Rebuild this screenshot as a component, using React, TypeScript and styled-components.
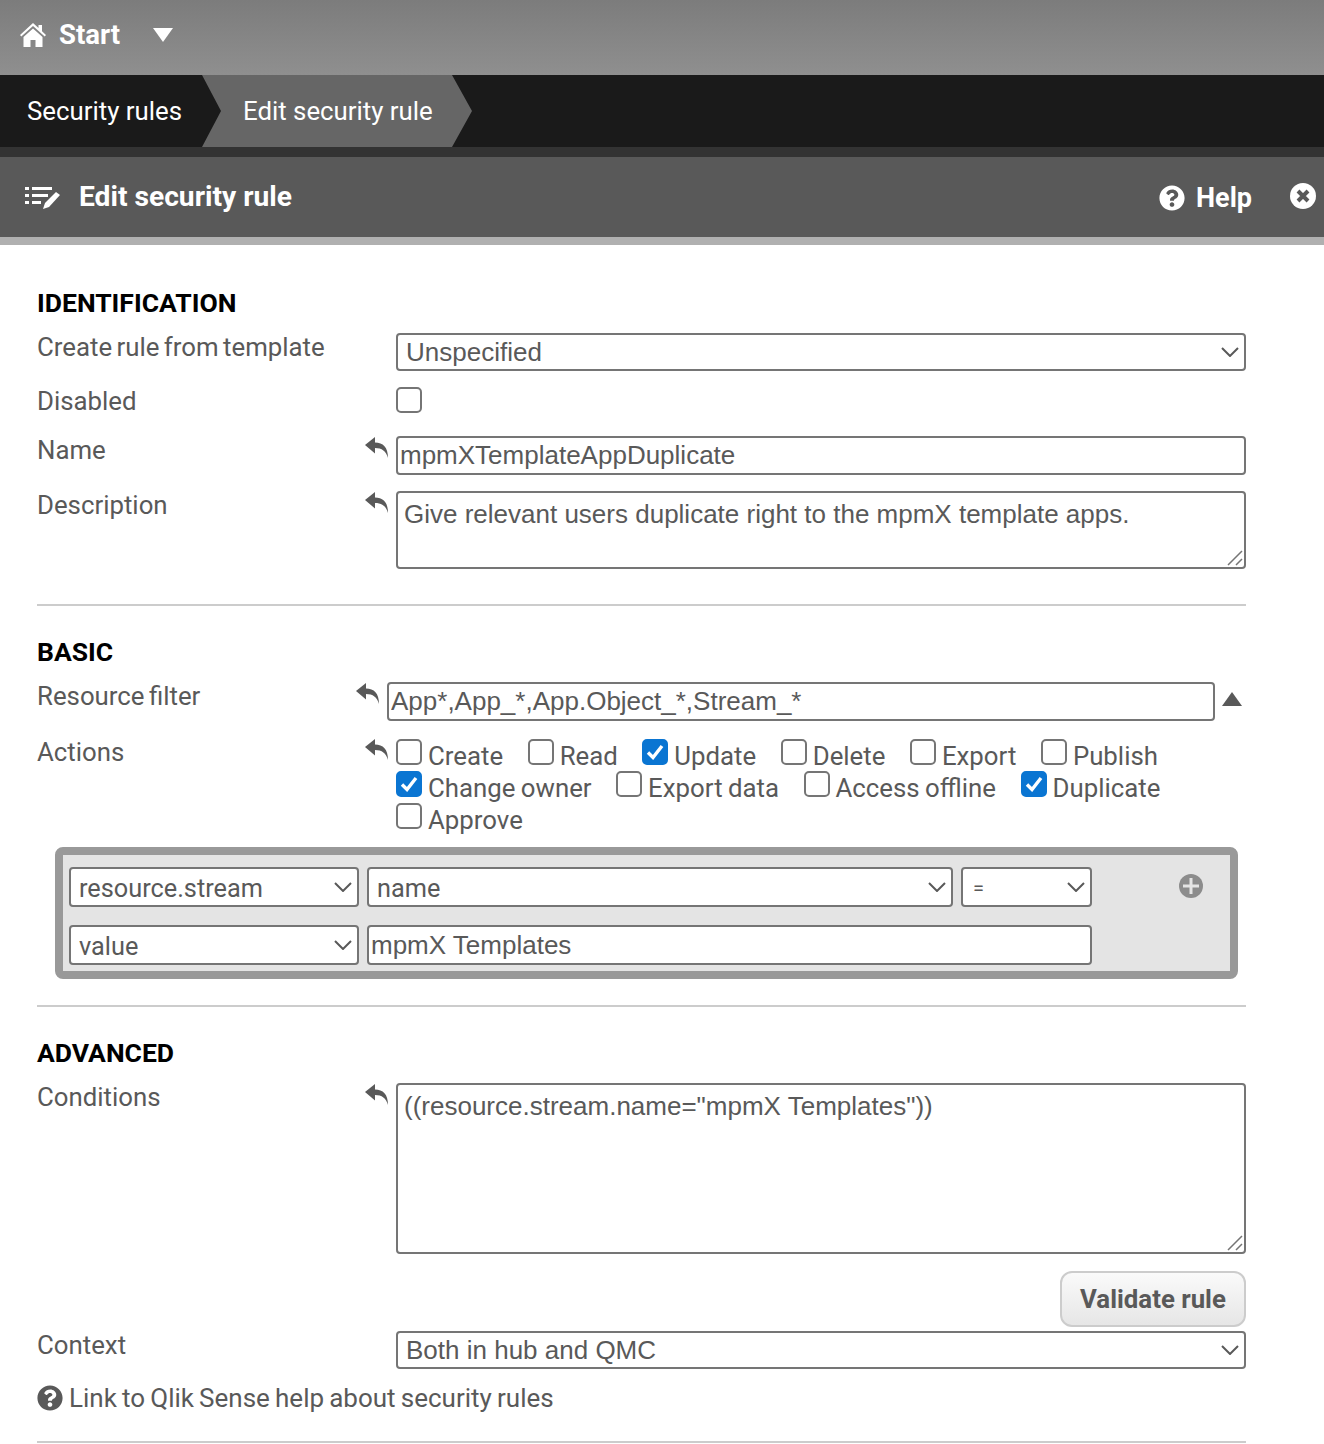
import React from 'react';
import styled, { createGlobalStyle } from 'styled-components';
import { FaQuestionCircle } from 'react-icons/fa';

const labelFont = `Roboto, "Liberation Sans", sans-serif`;
const inputFont = `"Liberation Sans", Arial, sans-serif`;

const GlobalStyle = createGlobalStyle`
  html, body {
    margin: 0;
    padding: 0;
    background: #fff;
    font-family: ${labelFont};
    color: #595959;
  }
  * { box-sizing: border-box; }
`;

const Page = styled.div`
  width: 1324px;
  height: 1444px;
  overflow: hidden;
`;

const TopBar = styled.header`
  height: 75px;
  display: flex;
  align-items: center;
  padding: 0 0 6px 19px;
  background: linear-gradient(to bottom, #7c7c7c, #8f8f8f);
  color: #fff;
  font-size: 27.5px;
  font-weight: 700;
`;

const StartLabel = styled.span`
  margin-left: 12px;
`;

const Caret = styled.span`
  margin-left: 33px;
  width: 0;
  height: 0;
  border-left: 10px solid transparent;
  border-right: 10px solid transparent;
  border-top: 14px solid #fff;
`;

const Breadcrumbs = styled.nav`
  height: 82px;
  display: flex;
  background: #1a1a1a;
  border-bottom: 10px solid #333;
  color: #fff;
  font-size: 25.8px;
`;

const FirstCrumb = styled.div`
  width: 222px;
  padding-left: 27px;
  display: flex;
  align-items: center;
`;

const ActiveCrumb = styled.div`
  width: 270px;
  margin-left: -20px;
  padding-left: 41px;
  display: flex;
  align-items: center;
  background: #666;
  clip-path: polygon(0 0, 250px 0, 270px 50%, 250px 100%, 0 100%, 19px 50%);
`;

const TitleBar = styled.div`
  height: 88px;
  display: flex;
  align-items: center;
  padding: 0 8px 0 25px;
  background: #595959;
  border-bottom: 8px solid #b0b0b0;
  color: #fff;
  font-weight: 700;
`;

const PageTitle = styled.h1`
  margin: 0 0 2px 18px;
  font-size: 28.2px;
  font-weight: 700;
  flex: 1;
`;

const HelpLink = styled.div`
  display: flex;
  align-items: center;
  gap: 11px;
  margin: 2px 38px 0 0;
  font-size: 27px;
`;

const CloseButton = styled.div`
  display: flex;
  margin-bottom: 3px;
`;

const Content = styled.main`
  width: 1209px;
  margin-left: 37px;
`;

const Section = styled.section<{ $top: number; $bottom: number }>`
  padding-top: ${p => p.$top}px;
  padding-bottom: ${p => p.$bottom}px;
  border-bottom: 2px solid #ccc;
`;

const Heading = styled.h2`
  margin: 0 0 13px;
  height: 32px;
  line-height: 32px;
  font-size: 26.5px;
  font-weight: 700;
  color: #000;
`;

const Row = styled.div<{ $gap?: number }>`
  display: grid;
  grid-template-columns: 328px 1fr;
  margin-bottom: ${p => p.$gap ?? 0}px;
`;

const Label = styled.div`
  font-size: 25.8px;
  line-height: 30px;
  word-spacing: -2px;
  color: #595959;
`;

const Control = styled.div<{ $shift?: number }>`
  position: relative;
  display: flex;
  gap: 8px;
  align-items: flex-start;
  padding-top: 1px;
  margin-left: ${p => p.$shift ?? 0}px;
`;

const UndoSlot = styled.div`
  width: 23px;
  height: 30px;
  flex: none;
  padding-top: 1px;
  display: flex;
`;

const FieldBase = `
  display: block;
  width: 100%;
  background: #fff;
  border: 2px solid #757575;
  border-radius: 4px;
  color: #595959;
  font-family: ${inputFont};
  font-size: 26px;
  outline: none;
`;

const TextInput = styled.input<{ $height?: number; $width?: number }>`
  ${FieldBase}
  height: ${p => p.$height ?? 39}px;
  width: ${p => (p.$width ? `${p.$width}px` : '100%')};
  flex: ${p => (p.$width ? 'none' : '1')};
  padding: 0 2px;
`;

const TextArea = styled.textarea<{ $height: number }>`
  ${FieldBase}
  height: ${p => p.$height}px;
  padding: 5px 6px;
  line-height: 32px;
  resize: none;
`;

const Grip = styled.svg`
  position: absolute;
  right: 3px;
  bottom: 3px;
  width: 16px;
  height: 16px;
  fill: none;
  stroke: #757575;
  stroke-width: 1.5;
`;

const SelectWrap = styled.div<{ $width?: number; $height?: number }>`
  position: relative;
  flex: ${p => (p.$width ? 'none' : '1')};
  width: ${p => (p.$width ? `${p.$width}px` : 'auto')};
  height: ${p => p.$height ?? 38}px;
`;

const Select = styled.select<{ $sans?: boolean; $small?: boolean }>`
  ${FieldBase}
  height: 100%;
  padding: ${p => (p.$sans ? 2 : 0)}px ${p => (p.$small ? 10 : 8)}px 0;
  appearance: none;
  font-family: ${p => (p.$sans ? labelFont : inputFont)};
  font-size: ${p => (p.$small ? 20 : p.$sans ? 25.3 : 26)}px;
`;

const Chevron = styled.svg`
  position: absolute;
  right: 7px;
  top: 50%;
  transform: translateY(-50%);
  width: 18px;
  height: 10px;
  fill: none;
  stroke: #595959;
  stroke-width: 2;
  pointer-events: none;
`;

const FilterToggle = styled.span`
  margin: 10px 0 0 -1px;
  width: 0;
  height: 0;
  border-left: 10px solid transparent;
  border-right: 10px solid transparent;
  border-bottom: 14px solid #595959;
`;

const CheckGrid = styled.div`
  flex: 1;
  display: flex;
  flex-wrap: wrap;
  column-gap: 24.5px;
  margin-top: 1px;
`;

const CheckItem = styled.label`
  height: 32px;
  display: flex;
  align-items: flex-start;
  gap: 6px;
  font-size: 25.8px;
  line-height: 30px;
  word-spacing: -1px;
  color: #595959;
`;

const CheckLabel = styled.span`
  padding-top: 2px;
`;

const Box = styled.span<{ $on?: boolean }>`
  width: 26px;
  height: 26px;
  flex: none;
  display: flex;
  align-items: center;
  justify-content: center;
  border-radius: 5px;
  background: ${p => (p.$on ? '#0a75d2' : '#fff')};
  border: 2px solid ${p => (p.$on ? '#0a75d2' : '#757575')};
`;

const RuleBox = styled.div`
  width: 1183px;
  margin-left: 18px;
  padding: 12px 6px 6px;
  background: #e4e4e4;
  border: 8px solid #999;
  border-radius: 8px;
`;

const RuleRow = styled.div<{ $gap?: number }>`
  display: flex;
  align-items: center;
  gap: 8px;
  margin-bottom: ${p => p.$gap ?? 0}px;
`;

const AddButton = styled.div`
  margin: -3px 0 0 79px;
  display: flex;
`;

const ButtonRow = styled.div`
  display: flex;
  justify-content: flex-end;
  margin: 17px 0 3px;
`;

const ValidateButton = styled.button`
  width: 186px;
  height: 56px;
  padding: 0;
  border: 2px solid #ccc;
  border-radius: 12px;
  background: linear-gradient(to bottom, #fafafa, #e6e6e6);
  color: #595959;
  font-family: ${labelFont};
  font-size: 25.8px;
  font-weight: 700;
`;

const HelpRow = styled.div`
  display: flex;
  align-items: center;
  gap: 6px;
  margin-top: 14px;
  height: 30px;
  font-size: 26px;
  word-spacing: -1.3px;
  color: #595959;
`;

const Undo = () => (
  <UndoSlot>
    <svg width="23" height="22" viewBox="0 0 23 22" fill="#595959">
      <path d="M0 8L10 0v5.5C18 5.5 23 10 23 21c-2-7-6-10-13-10v5.5z" />
    </svg>
  </UndoSlot>
);

const Dropdown = ({ value, width, height, sans, small }: { value: string; width?: number; height?: number; sans?: boolean; small?: boolean }) => (
  <SelectWrap $width={width} $height={height}>
    <Select defaultValue={value} $sans={sans} $small={small}>
      <option>{value}</option>
    </Select>
    <Chevron viewBox="0 0 18 10">
      <path d="M1 1l8 8 8-8" />
    </Chevron>
  </SelectWrap>
);

const Check = ({ label, on }: { label: string; on?: boolean }) => (
  <CheckItem>
    <Box $on={on}>
      {on && (
        <svg width="18" height="16" viewBox="0 0 18 16">
          <path d="M2 8.5l5 5L16 2" fill="none" stroke="#fff" strokeWidth="3.4" />
        </svg>
      )}
    </Box>
    <CheckLabel>{label}</CheckLabel>
  </CheckItem>
);

const ResizeGrip = () => (
  <Grip viewBox="0 0 16 16">
    <path d="M1 15L15 1M9 15l6-6" />
  </Grip>
);

const HomeIcon = () => (
  <svg width="28" height="26" viewBox="0 0 28 26" fill="#fff">
    <path d="M14 1L1 13l1.3 1.5L14 4l11.7 10.5L27 13l-4-3.7V3h-3.5v3L14 1z" />
    <path d="M14 6.5L4.5 15v10h7v-7h5v7h7V15L14 6.5z" />
  </svg>
);

const EditListIcon = () => (
  <svg width="36" height="24" viewBox="0 0 36 24" fill="#fff">
    <path d="M0 2h4v3H0zM7 2h20v3H7zM0 9h4v3H0zM7 9h16v3H7zM0 16h4v3H0zM7 16h9v3H7z" />
    <path d="M31 7l4 3-11 12-6 2 2-6z" />
  </svg>
);

const CloseIcon = () => (
  <svg width="26" height="26" viewBox="0 0 26 26">
    <circle cx="13" cy="13" r="13" fill="#fff" />
    <path d="M8 8l10 10M18 8L8 18" stroke="#595959" strokeWidth="4" />
  </svg>
);

const PlusIcon = () => (
  <svg width="24" height="24" viewBox="0 0 24 24">
    <circle cx="12" cy="12" r="12" fill="#8c8c8c" />
    <path d="M12 4v16M4 12h16" stroke="#e4e4e4" strokeWidth="3" />
  </svg>
);

export default function App() {
  return (
    <Page>
      <GlobalStyle />
      <TopBar>
        <HomeIcon />
        <StartLabel>Start</StartLabel>
        <Caret />
      </TopBar>
      <Breadcrumbs>
        <FirstCrumb>Security rules</FirstCrumb>
        <ActiveCrumb>Edit security rule</ActiveCrumb>
      </Breadcrumbs>
      <TitleBar>
        <EditListIcon />
        <PageTitle>Edit security rule</PageTitle>
        <HelpLink>
          <FaQuestionCircle size={26} />
          Help
        </HelpLink>
        <CloseButton>
          <CloseIcon />
        </CloseButton>
      </TitleBar>
      <Content>
        <Section $top={42} $bottom={35}>
          <Heading>IDENTIFICATION</Heading>
          <Row $gap={15}>
            <Label>Create rule from template</Label>
            <Control>
              <UndoSlot />
              <Dropdown value="Unspecified" />
            </Control>
          </Row>
          <Row $gap={18}>
            <Label>Disabled</Label>
            <Control>
              <UndoSlot />
              <Box />
            </Control>
          </Row>
          <Row $gap={15}>
            <Label>Name</Label>
            <Control>
              <Undo />
              <TextInput readOnly defaultValue="mpmXTemplateAppDuplicate" />
            </Control>
          </Row>
          <Row>
            <Label>Description</Label>
            <Control>
              <Undo />
              <TextArea readOnly $height={78} defaultValue="Give relevant users duplicate right to the mpmX template apps." />
              <ResizeGrip />
            </Control>
          </Row>
        </Section>
        <Section $top={30} $bottom={26}>
          <Heading>BASIC</Heading>
          <Row $gap={16}>
            <Label>Resource filter</Label>
            <Control $shift={-9}>
              <Undo />
              <TextInput readOnly $width={828} defaultValue="App*,App_*,App.Object_*,Stream_*" />
              <FilterToggle />
            </Control>
          </Row>
          <Row $gap={12}>
            <Label>Actions</Label>
            <Control>
              <Undo />
              <CheckGrid>
                <Check label="Create" />
                <Check label="Read" />
                <Check label="Update" on />
                <Check label="Delete" />
                <Check label="Export" />
                <Check label="Publish" />
                <Check label="Change owner" on />
                <Check label="Export data" />
                <Check label="Access offline" />
                <Check label="Duplicate" on />
                <Check label="Approve" />
              </CheckGrid>
            </Control>
          </Row>
          <RuleBox>
            <RuleRow $gap={18}>
              <Dropdown value="resource.stream" width={290} height={40} sans />
              <Dropdown value="name" width={586} height={40} sans />
              <Dropdown value="=" width={131} height={40} sans small />
              <AddButton>
                <PlusIcon />
              </AddButton>
            </RuleRow>
            <RuleRow>
              <Dropdown value="value" width={290} height={40} sans />
              <TextInput readOnly $width={725} $height={40} defaultValue="mpmX Templates" />
            </RuleRow>
          </RuleBox>
        </Section>
        <Section $top={30} $bottom={28}>
          <Heading>ADVANCED</Heading>
          <Row>
            <Label>Conditions</Label>
            <Control>
              <Undo />
              <TextArea readOnly $height={171} defaultValue={'((resource.stream.name="mpmX Templates"))'} />
              <ResizeGrip />
            </Control>
          </Row>
          <ButtonRow>
            <ValidateButton>Validate rule</ValidateButton>
          </ButtonRow>
          <Row>
            <Label>Context</Label>
            <Control>
              <UndoSlot />
              <Dropdown value="Both in hub and QMC" />
            </Control>
          </Row>
          <HelpRow>
            <FaQuestionCircle size={26} />
            Link to Qlik Sense help about security rules
          </HelpRow>
        </Section>
      </Content>
    </Page>
  );
}
